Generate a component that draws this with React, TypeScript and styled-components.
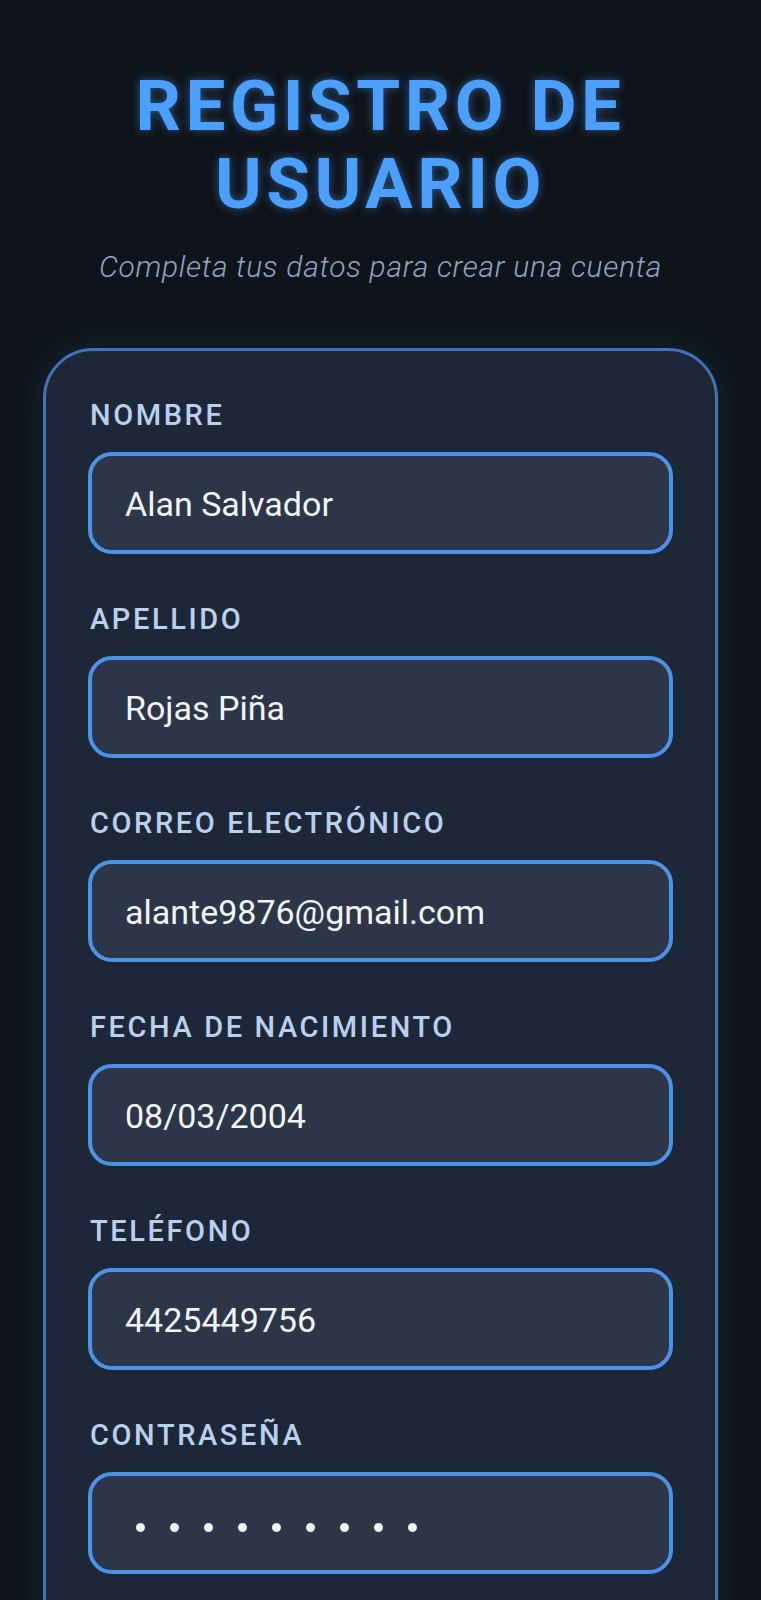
import React from "react";
import styled, { createGlobalStyle } from "styled-components";

const GlobalStyle = createGlobalStyle`
  html, body {
    margin: 0;
    padding: 0;
    background: #0f141a;
  }
  * { box-sizing: border-box; }
`;

const Page = styled.main`
  min-height: 1600px;
  background: #0f141a;
  font-family: Roboto, "Open Sans", "Liberation Sans", sans-serif;
  padding: 67px 43px 60px;
  display: flex;
  flex-direction: column;
  align-items: center;
`;

const Title = styled.h1`
  margin: 0;
  font-size: 71px;
  line-height: 78px;
  font-weight: 700;
  letter-spacing: 4.5px;
  color: #4a9fff;
  text-align: center;
  text-shadow: 0 0 10px rgba(74, 144, 226, 0.55);
`;

const Subtitle = styled.p`
  margin: 26px 0 0;
  font-size: 30px;
  line-height: 35px;
  font-style: italic;
  font-weight: 300;
  letter-spacing: 0.7px;
  color: #8ea7c8;
  text-align: center;
`;

const Card = styled.form`
  margin-top: 64px;
  width: 100%;
  background: #1e2738;
  border: 3px solid #4073be;
  border-radius: 50px;
  padding: 47px 42px 140px;
  box-shadow: 0 0 40px rgba(74, 144, 226, 0.12);
  display: flex;
  flex-direction: column;
  gap: 48px;
`;

const Field = styled.div`
  display: flex;
  flex-direction: column;
  gap: 20px;
`;

const Label = styled.label`
  padding-left: 2px;
  font-size: 29px;
  line-height: 34px;
  font-weight: 500;
  letter-spacing: 2.6px;
  color: #b9d0ee;
`;

const InputBox = styled.div`
  height: 102px;
  border: 4px solid #4b93e8;
  border-radius: 24px;
  background: #2d3548;
  display: flex;
  align-items: center;
  padding: 2px 0 0 33px;
  font-size: 34px;
  color: #f2f5f8;
`;

const Dots = styled.div`
  display: flex;
  align-items: center;
  gap: 25px;
  padding: 6px 0 0 11px;
`;

const Dot = styled.span`
  display: block;
  width: 9px;
  height: 9px;
  border-radius: 50%;
  background: #eef3f6;
`;

const fields = [
  { label: "NOMBRE", value: "Alan Salvador" },
  { label: "APELLIDO", value: "Rojas Piña" },
  { label: "CORREO ELECTRÓNICO", value: "alante9876@gmail.com" },
  { label: "FECHA DE NACIMIENTO", value: "08/03/2004" },
  { label: "TELÉFONO", value: "4425449756" },
];

export default function App() {
  return (
    <>
      <GlobalStyle />
      <Page>
        <Title>
          REGISTRO DE
          <br />
          USUARIO
        </Title>
        <Subtitle>Completa tus datos para crear una cuenta</Subtitle>
        <Card onSubmit={(e) => e.preventDefault()}>
          {fields.map((f) => (
            <Field key={f.label}>
              <Label>{f.label}</Label>
              <InputBox>{f.value}</InputBox>
            </Field>
          ))}
          <Field>
            <Label>CONTRASEÑA</Label>
            <InputBox aria-label="contraseña">
              <Dots>
                {Array.from({ length: 9 }).map((_, i) => (
                  <Dot key={i} />
                ))}
              </Dots>
            </InputBox>
          </Field>
        </Card>
      </Page>
    </>
  );
}
